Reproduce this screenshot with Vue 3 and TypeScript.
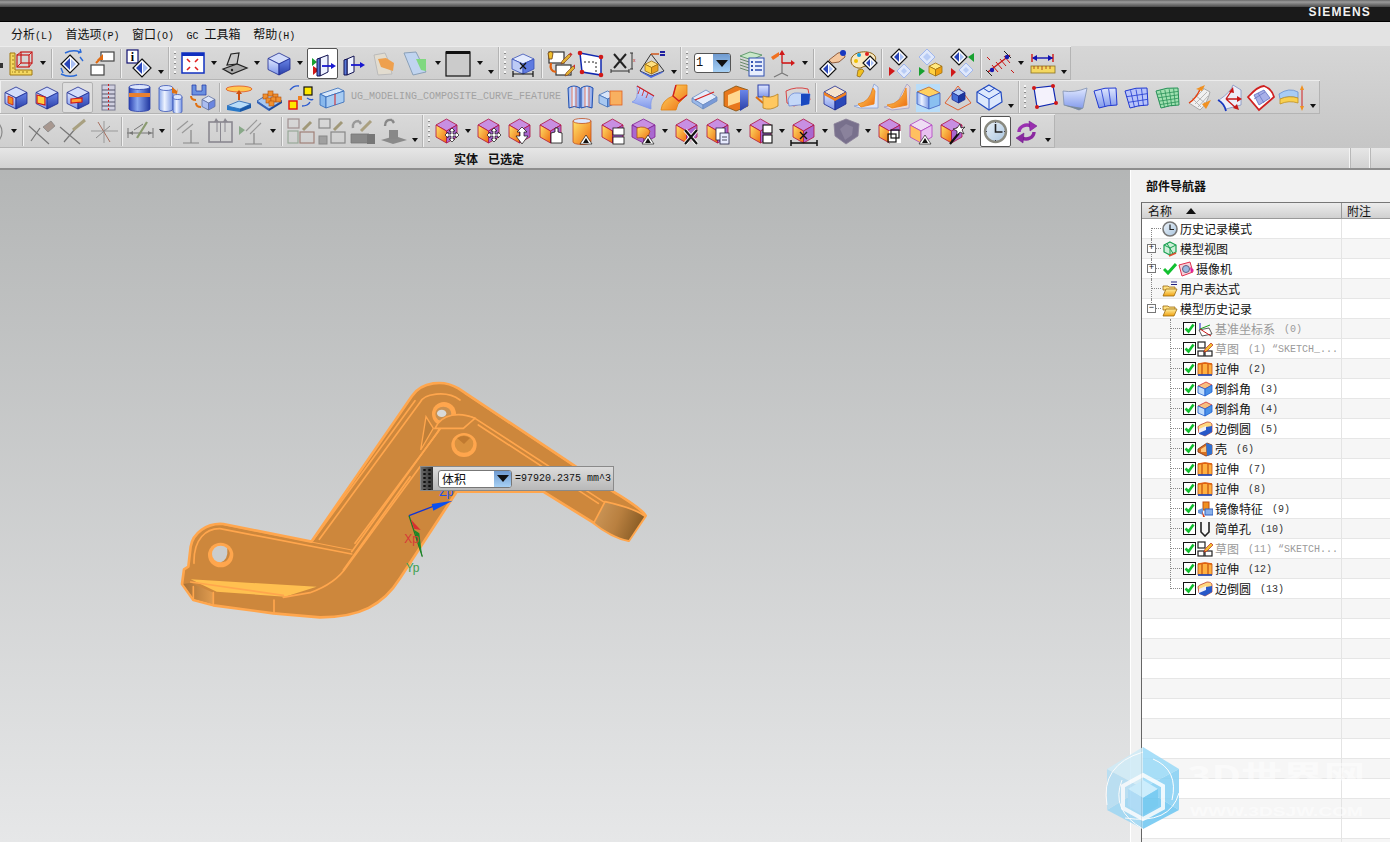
<script setup lang="ts">
// --- svg helpers, every toolbar icon is 31x31
const poly = (p: string, f: string, s = 'none', w = 0.8) =>
  `<polygon points="${p}" fill="${f}" stroke="${s}" stroke-width="${w}"/>`
const line = (d: string, s = '#222', w = 1, extra = '') =>
  `<path d="${d}" fill="none" stroke="${s}" stroke-width="${w}" ${extra}/>`
const fillp = (d: string, f: string, s = 'none', w = 0.8) =>
  `<path d="${d}" fill="${f}" stroke="${s}" stroke-width="${w}"/>`
const rect = (x: number, y: number, w: number, h: number, f: string, s = 'none', sw = 1) =>
  `<rect x="${x}" y="${y}" width="${w}" height="${h}" fill="${f}" stroke="${s}" stroke-width="${sw}"/>`
const cube = (x: number, y: number, w: number, h: number, t: string, l: string, r: string, s = '#1c2a90') => {
  const m = x + w / 2, a = y + h * 0.25, b = y + h * 0.5, c = y + h * 0.75, d = y + h
  return poly(`${m},${y} ${x + w},${a} ${m},${b} ${x},${a}`, t, s) +
    poly(`${x},${a} ${m},${b} ${m},${d} ${x},${c}`, l, s) +
    poly(`${x + w},${a} ${m},${b} ${m},${d} ${x + w},${c}`, r, s)
}
const blueCube = cube(5, 5, 22, 22, '#d3ddfa', 'url(#gBlue)', 'url(#gDeep)')
const lightCube = cube(5, 6, 22, 20, '#e4ebfd', '#bccbf6', '#5f7be0', '#3850b8')
const fc = cube(5, 3, 21, 24, '#c88fe2', 'url(#gOr)', '#a968d0', '#b01040')
const cyl = (x: number, y: number, w: number, h: number, f = 'url(#gCyl)', s = '#3a55b8') =>
  fillp(`M${x} ${y + 2}v${h}a${w / 2} 2.5 0 0 0 ${w} 0v-${h}z`, f, s) +
  `<ellipse cx="${x + w / 2}" cy="${y + 2}" rx="${w / 2}" ry="2.5" fill="#dde6fc" stroke="${s}" stroke-width=".8"/>`
const diamond = (x: number, y: number, r = 8, c = '#2a46b8') =>
  poly(`${x},${y - r} ${x + r},${y} ${x},${y + r} ${x - r},${y}`, '#fff', '#111', 1.2) +
  fillp(`M${x} ${y - r + 3}v${2 * r - 6}l-${r - 3} -${r - 3}z`, c) +
  fillp(`M${x + 1} ${y - r + 4}v${2 * r - 8}l${r - 4} -${r - 4}z`, '#a9c0f4')
const paleDiamond = (x: number, y: number, r = 8) =>
  poly(`${x},${y - r} ${x + r},${y} ${x},${y + r} ${x - r},${y}`, '#dfe8fb', '#9fb6ee', 1) +
  poly(`${x},${y - r + 4} ${x + r - 4},${y} ${x},${y + r - 4} ${x - r + 4},${y}`, '#b8ccf6')
const move = fillp('M21 12l3 3h-2v3h3v-2l3 3-3 3v-2h-3v3h2l-3 3-3-3h2v-3h-3v2l-3-3 3-3v2h3v-3h-2z', '#fff', '#111', 0.7)
const warn = fillp('M20 19l6 9h-12z', '#fff', '#000', 0.6) + fillp('M20 22l3 5h-6z', '#111')
const pencil = (x: number, y: number, c = '#e0b030') =>
  fillp(`M${x} ${y}l7-7 2 2-7 7-3 1z`, c, '#7a3010', 0.6) + fillp(`M${x + 7} ${y - 7}l1.5-1.5 2 2-1.5 1.5z`, '#d03030')
const surf = (cols: number, rows: number, c: string, f: string) => {
  let s = fillp('M4 9q11-4 22-3l1 17q-9 0-18 3z', f, c, 1)
  for (let i = 1; i < cols; i++) { const k = i / cols; s += line(`M${4 + 22 * k} ${9 - 3 * k}l${5 - 4 * k} 17`, c, 0.8) }
  for (let i = 1; i < rows; i++) { const k = i / rows; s += line(`M${4 + 5 * k} ${9 + 17 * k}l${22 - 4 * k} -3`, c, 0.8) }
  return s
}

const icons: Record<string, string> = {
  partial: rect(25, 15, 3, 5, '#333'),
  lcube: fillp('M4 5h5v17h17v5h-22z', '#f4d860', '#a07810', 1) + line('M6 24h1M9 25v-2M13 25v-2M17 25v-2M21 25v-2M6 20h2M6 16h2M6 12h2M6 8h2', '#8a6a10', .8) +
    rect(11, 7, 12, 12, 'none', '#c81818', 1.2) + rect(15, 4, 11, 11, 'none', '#c81818', 1.2) + line('M11 7l4-3M23 7l3-3M23 19l3-4M11 19l4-4', '#c81818', 1),
  dsync: diamond(14, 16, 9) + line('M9 5Q17 1 24 4M22 5l3-1-1-3M24 9l3 4M5 20l2 5M5 26Q13 30 21 27', '#2a6ad8', 1.4),
  boxes: rect(14, 4, 13, 9, '#fff', '#444', 1.2) + rect(4, 17, 13, 10, '#fff', '#444', 1.2) + line('M9 15l6-6', '#e06a10', 2.2) + fillp('M16 6v6h-6z', '#e06a10'),
  info: rect(3, 2, 11, 13, '#fff', '#101070', 1.2) + `<text x="8.5" y="13" text-anchor="middle" font-size="12" font-weight="700" font-family="Liberation Serif" fill="#000">i</text>` + diamond(18, 20, 9),
  fit: rect(5, 5, 22, 20, '#fff', '#1030c0', 1.5) + rect(5, 5, 22, 3, '#1030c0') + line('M10 11l3 3M21 11l-3 3M10 22l3-3M21 22l-3-3', '#e02020', 1.6),
  laptop: fillp('M7 17l4-11 8-1-2 11z', '#c8c8c8', '#222', 1.2) + fillp('M3 21l14-5 10 4-15 6z', '#aaa', '#222', 1.2) + `<circle cx="12" cy="22" r="1.2" fill="#222"/>`,
  bluecube: blueCube,
  section: poly('5,10 10,14 5,18', '#18a030') + poly('6,18 12,22 6,27', '#d01818') + poly('13,10 21,7 21,24 13,28', '#eef2ff', '#101050', 1) + poly('10,11 13,10 13,28 10,28', '#5878d8', '#101050', 1) + line('M15 18h9', '#1818d0', 1.8) + poly('29,18 24,15 24,21', '#1818d0'),
  section2: poly('8,11 15,8 15,24 8,27', '#eef2ff', '#101050', 1) + poly('5,12 8,11 8,27 5,27', '#5878d8', '#101050', 1) + line('M12 17h9', '#1818d0', 1.8) + poly('26,17 21,14 21,20', '#1818d0'),
  sheet: poly('4,7 15,5 19,14 22,26 8,27', '#e2dccf', '#bbb', 1) + poly('8,11 16,10 24,15 23,23 11,19', '#eea04e'),
  greensheet: poly('3,5 15,4 25,24 12,27', '#c0d4f0', '#8aa0b8', 1) + poly('15,11 25,11 25,23 20,22', '#80d880'),
  box: rect(2, 4, 24, 24, '#cbcbcb', '#111', 1.2) + rect(2, 3, 24, 3, '#111'),
  cubedim: lightCube + line('M6 26h20M6 23v6M26 23v6', '#111', 1.2) + line('M13 15l6 6M19 15l-6 6', '#111', 1.3),
  sketchedit: rect(5, 4, 15, 11, '#fff', '#333', 1.2) + rect(12, 17, 15, 10, '#fff', '#333', 1.2) + line('M7 15q-2 8 5 9', '#e06010', 2.2) + fillp('M4 5q3-3 5 0l-1 6h-3z', '#f0c030', '#704010', .8) + pencil(18, 13) + pencil(22, 25),
  quad: poly('5,5 26,9 26,27 7,24', '#fff', '#1028b0', 1.5) + line('M9 14h12M21 14v10', '#222', 1, 'stroke-dasharray="2 2"') +
    `<circle cx="5" cy="5" r="2.3" fill="#d01818"/><circle cx="26" cy="9" r="2.3" fill="#d01818"/><circle cx="26" cy="27" r="2.3" fill="#d01818"/><circle cx="7" cy="24" r="2.3" fill="#d01818"/>`,
  xdim: line('M8 6l12 14M20 6l-12 14', '#222', 2) + line('M5 23h18M5 21v4M23 21v4M24 5h3M26 5v16M24 21h3', '#333', 1) + `<text x="27" y="14" font-size="5" fill="#c02020" font-family="Liberation Sans">x</text>`,
  pyramid: poly('14,6 3,23 14,28 27,23', 'none', '#333', 1) + cube(8, 13, 13, 13, '#ffe080', '#ffd040', '#e8a020', '#a07010') + poly('3,23 14,28 27,23 25,25 14,30 5,25', '#4868e0') + line('M14 6h8', '#d05010', 1.4) + rect(23, 3, 5, 2, '#2020a0') + rect(23, 6, 5, 2, '#2020a0'),
  layers: poly('3,8 13,4 25,7 15,12', '#c8e8c8', '#4a8a5a') + line('M3 11l12 4M3 14l12 4M3 17l12 4M3 20l12 4', '#6a8a6a', 1) + rect(12, 10, 15, 18, '#e8eefc', '#3050b0', 1) + line('M18 14h7M18 18h7M18 22h7', '#3050b0', 1.4) + rect(14, 13, 2, 2, '#3050b0') + rect(14, 17, 2, 2, '#3050b0') + rect(14, 21, 2, 2, '#3050b0'),
  axes: line('M14 15v10M14 25l-8 4M14 25l6 3', '#777', 1.2) + line('M14 15h11', '#d01818', 1.6) + line('M14 4v11', '#d01818', 1.4) + poly('27,15 23,12 23,18', '#d01818') + poly('14,2 11,7 17,7', '#d01818') + poly('3,9 11,4 11,8 5,12', '#f07020'),
  hand: diamond(11, 21, 8) + fillp('M12 12l9-7 6-1 1 5-6 5-7 1z', '#f4c8a0', '#7a4020', .8) + `<circle cx="26" cy="5" r="3" fill="#1838c0"/>`,
  palette: fillp('M3 12C4 3 22 1 27 8c3 5-4 10-9 10-3 0-5 3-8 2C6 19 3 17 3 12z', '#f8e8c0', '#8a6010', 1) + `<circle cx="11" cy="7" r="2" fill="#18a0e0"/><circle cx="19" cy="6" r="2" fill="#e02020"/><circle cx="8" cy="13" r="2" fill="#f0c000"/>` + diamond(22, 15, 7) + fillp('M10 22l4-1 2 2-4 6-3-1z', '#f0c020', '#8a6010', .7),
  dia1: diamond(14, 9, 8) + poly('4,19 10,23 4,28', '#d01818') + paleDiamond(19, 23, 7),
  dia2: paleDiamond(11, 9, 8) + cube(13, 15, 13, 13, '#ffe880', '#ffd040', '#f0a010', '#a07010') + poly('3,19 9,23 3,28', '#18a030'),
  dia3: diamond(12, 9, 8) + poly('27,5 21,9 27,14', '#18a030') + poly('4,20 9,24 4,29', '#d01818') + paleDiamond(19, 22, 7),
  hatch: line('M4 24L26 7', '#c81818', 1.4) + line('M8 17l6 7M12 14l6 7M16 11l6 7M20 8l6 7M6 12L3 9M27 22l3 3', '#c81818', 1) + line('M2 22l6 6M20 3l7 7', '#222', 1) + `<circle cx="8" cy="22" r="2.2" fill="#1818b0"/><circle cx="23" cy="9" r="2.2" fill="#1818b0"/>`,
  ruler: line('M6 10h20', '#1010b0', 1.4) + line('M5 6v8M26 6v8', '#d01818', 1.4) + poly('5,10 10,7 10,13', '#1010b0') + poly('26,10 21,7 21,13', '#1010b0') + rect(4, 18, 24, 7, '#f4d860', '#8a7020', .8) + line('M7 18v3M11 18v3M15 18v4M19 18v3M23 18v3', '#a03010', .8),

  c1: blueCube + poly('8,14 13,16 13,23 8,21', '#f09020', '#c81818'),
  c2: blueCube + poly('6,13 14,15 14,23 6,21', '#ffd040', '#d01818', 1.2),
  c3: blueCube + poly('9,17 20,16 20,20 9,21', '#ffa030', '#d01818', 1.2),
  spring: rect(9, 3, 13, 25, '#d0d0e0', '#7a7a90', 1) + line('M9 8h13M9 12h13M9 16h13M9 20h13M9 24h13', '#55556a', 1) + line('M15.5 2v27', '#d02020', 1, 'stroke-dasharray="2 2"'),
  stack: cyl(5, 3, 21, 22, 'url(#gDeepCyl)', '#2a3fa8') + rect(5, 11, 21, 4, '#e88030'),
  cyls: cyl(4, 4, 14, 21) + cyl(18, 13, 9, 14) + fillp('M17 5l5 4 1-3-1 6-5-1z', '#e07010'),
  combo: fillp('M6 3h4v6h6V3h4v10H6z', '#6a90e0', '#2a3fa8') + line('M10 21q0 4 5 4', '#e07010', 2) + cube(16, 14, 13, 14, '#dde6fa', '#aabdf0', '#6a86e0', '#6070a0') + line('M5 14q0 4 5 4', '#e07010', 2),
  boss: `<ellipse cx="16" cy="7" rx="13" ry="3" fill="#ffc850" stroke="#e05020" stroke-width=".8"/>` + line('M16 10v8', '#d05010', 2) + poly('16,8 13,12 19,12', '#d05010') + poly('4,24 16,19 28,22 17,27', '#b8dcf8', '#2060b0') + poly('4,24 17,27 17,30 4,28', '#2878c8') + poly('17,27 28,22 28,26 17,30', '#1858a8'),
  pegs: poly('3,19 16,11 28,19 15,27', '#a8c8f0', '#2050a8') + poly('3,19 15,27 15,29 3,21', '#3060b8') + poly('15,27 28,19 28,21 15,29', '#1848a0') + [[10, 15], [15, 12], [20, 15], [13, 19], [18, 18], [23, 18], [16, 22]].map(([x, y]) => rect(x - 1, y - 3, 5, 5, '#f09030', '#b05010', .6)).join(''),
  pts2: rect(19, 5, 8, 8, '#ffe800', '#111', 1.2) + rect(4, 19, 8, 8, '#ffe800', '#e01010', 1.4) + line('M5 8q4-5 9-4M22 16q5 3 6 1M17 24q6 0 8-4', '#2858d0', 1.4) + rect(13, 14, 4, 4, '#f08020'),
  block: poly('4,12 22,6 28,9 10,15', '#d8e8fa', '#3068b8') + poly('4,12 10,15 10,26 4,23', '#88b8ec', '#3068b8') + poly('10,15 28,9 28,20 10,26', '#a8ccf2', '#3068b8') + line('M19 12v11', '#d82020', 1),
  book: fillp('M3 6q6-4 12 0v20q-6-3-11 0z', 'url(#gCyl)', '#2050b0', 1) + fillp('M16 6q6-4 12 0l-1 20q-5-3-11 0z', 'url(#gCyl)', '#2050b0', 1) + line('M7 5v20M11 5v20M20 5v20M24 5v20', '#d04020', .7),
  boxor: cube(3, 9, 17, 16, '#d8e6fa', '#a8c8f0', '#6898e0', '#4070b8') + rect(14, 9, 12, 14, '#f8b060', '#e06020', .8),
  sweep: fillp('M5 20Q12 18 10 4l17 10q-4 3-3 13z', 'url(#gBlue)', '#7f97ea') + line('M10 4l17 10', '#d02020', 1.2) + line('M13 6l-2 6M17 8l-2 6M21 11l-2 5', '#d02020', .8),
  swept: fillp('M3 28q1-10 12-14l3-11h11v10l-9 9-2 6z', 'url(#gOr)', '#e08010') + line('M18 3l-3 11 6 5 8-6', '#d02020', 1.4),
  plate: poly('3,16 17,8 28,15 14,23', '#e4ecfb', '#6a8ac0') + poly('3,16 14,23 14,27 3,20', '#9ab8e8', '#6a8ac0') + poly('14,23 28,15 28,19 14,27', '#7a9ad8', '#6a8ac0') + line('M6 18l19-8', '#d82020', 1.2),
  frame: poly('4,10 16,4 28,8 28,24 16,29 4,24', '#e8781c', '#805010') + poly('8,13 20,8 20,20 8,24', '#ffd890') + poly('20,8 28,8 28,24 20,29', 'url(#gDeep)'),
  mirror2: rect(7, 3, 11, 12, 'url(#gBlue)', '#2a3fa8') + line('M5 15l7 6', '#e07010', 2) + fillp('M12 14q7 3 15-2v12q-8 5-15 2z', '#ffc860', '#b88020'),
  dashbox: fillp('M4 9q10-5 22-2l2 11-16 6-7-3z', 'none', '#d82020', .8) + fillp('M6 18q2-8 10-7l12 1-1 10-20 2z', '#c4d8f8', '#6a8ad8') + poly('19,12 28,12 27,22 19,24', '#1848c0'),
  band: cube(5, 4, 22, 24, '#f4e4d0', 'url(#gBlue)', '#2a48b8') + poly('5,10 16,16 27,10 27,13 16,19 5,13', '#f08020'),
  corner1: fillp('M4 24q13-1 17-13l3-9 4 3v21H10z', '#dde6fa', '#8aa0d0') + fillp('M8 22q12-2 15-16l2 3-1 13-13 3z', 'url(#gOr)', '#f08010'),
  corner2: fillp('M3 25q14-1 18-14l5-9 3 3-1 21-17 2z', '#e8d8d8', '#a0a0c8') + fillp('M6 23q14-1 19-17l1 17-15 3z', 'url(#gOr)', '#f08010'),
  topband: rect(4, 2, 24, 28, '#b8dcf8') + poly('5,10 17,5 28,11 17,15', '#ffd060', '#c06020') + poly('5,10 17,15 17,27 5,22', 'url(#gCyl)', '#4060c0') + poly('17,15 28,11 28,23 17,27', '#8ac0f0', '#4060c0'),
  pyr2: poly('15,4 2,21 15,28 28,21', 'none', '#e06030', 1) + cube(9, 7, 13, 14, '#b8d0f8', '#4870d8', '#1a38a0'),
  wire: poly('15,3 27,10 28,20 15,28 3,20 3,10', '#dce8fc', '#2048c0', 1.2) + line('M3 10l12 7 12-7M15 17v11M9 6l6 4 6-4', '#2048c0', 1),
  s1: poly('6,6 25,4 28,21 9,25', '#f4f2fc', '#1028b0', 1.2) + `<circle cx="6" cy="6" r="2" fill="#d01818"/><circle cx="25" cy="4" r="2" fill="#d01818"/><circle cx="28" cy="21" r="2" fill="#d01818"/><circle cx="9" cy="25" r="2" fill="#d01818"/>`,
  s2: fillp('M4 9q11 2 24-3l-4 20-4 2q-8-4-15-5z', 'url(#gBlue)', '#8090b0') + fillp('M4 23l16 5 4-2z', '#7a8a9a'),
  s3: surf(3, 1, '#2038d0', 'url(#gBlue)'),
  s4: surf(4, 3, '#2038d0', '#b8c4fa'),
  s5: surf(5, 5, '#289058', '#a0e0b0'),
  s6: fillp('M6 21Q14 16 18 5l9 5q-3 12-10 18z', '#f0f0f0', '#999') + line('M9 19l12-12M12 22l12-12M15 25l10-11M12 13l10 8M9 16l9 9', '#aaa', .8) + line('M6 21q8-5 12-16', '#e84010', 1.4) + poly('13,7 22,3 19,9', '#f09020') + poly('19,22 28,18 23,27', '#f09020'),
  s7: fillp('M5 18Q17 10 19 3l8 5v15q-8 2-15 4z', '#eceef8', '#8090c0') + line('M4 18q6 3 8 11', '#1838c0', 1.8) + line('M12 17l6-9M12 17l13 0M12 17l10 9', '#c81818', 1.3) + poly('19,5 15,10 20,11', '#c81818') + poly('28,17 23,14 23,20', '#c81818') + poly('25,28 19,26 23,22', '#c81818'),
  s8: fillp('M3 15Q13 4 19 4q8 3 10 11l-15 13z', '#fff', '#d02020', 1.8) + fillp('M9 13l10-5 6 8-11 7z', '#a8b0e8', '#6070c0') + line('M13 11l6 10M9 17l11-7', '#6070c0', .7),
  s9: fillp('M3 12q10-7 19-2v6q-9-3-18 1z', '#a8ccf4', '#6890d0') + fillp('M4 17q9-4 18-1v5q-9-3-18 1z', '#f8d050', '#c09020') + line('M26 7v18', '#d02020', 1) + poly('26,3 24,8 28,8', '#f09020') + poly('26,29 24,24 28,24', '#f09020'),

  circle: `<circle cx="17" cy="16" r="13" fill="none" stroke="#888" stroke-width="1.2"/>`,
  g1: line('M3 10l20 18M5 25l9-13', '#777', 1.2) + poly('17,11 25,5 29,10 22,16', '#a89890', '#888'),
  g2: line('M3 11l20 17M7 26l11-13', '#777', 1.2) + line('M16 14l12-10', '#a8a080', 3),
  g3: line('M3 15h27M16 5v22', '#999', 1) + line('M10 6l12 20', '#a87060', 1) + line('M8 22l14-12', '#8a8a8a', 1),
  g4: line('M2 17h26M3 12v10M28 12v10', '#777', 1) + poly('4,17 8,15 8,19', '#777') + poly('27,17 23,15 23,19', '#777') + line('M12 22L22 6', '#8a9a70', 2.2) + line('M9 14l9-6', '#777', 1),
  g5: line('M3 14l11-9M8 17l11-9', '#999', 1.2) + line('M17 14v13M9 27h16', '#888', 1.2),
  g6: rect(4, 6, 23, 20, 'none', '#8a8890', 1.6) + line('M12 6v10M20 6v10M15.5 6v20', '#8a8890', 1) + poly('11,2 14,6 9,6', '#8a8890') + poly('20,2 23,6 18,6', '#8a8890'),
  g7: poly('3,10 9,14 3,19', '#88a888') + line('M10 15l11-11M14 18l11-11', '#999', 1.2) + line('M18 17v11M9 28h17', '#888', 1.2),
  g8: rect(3, 3, 11, 9, 'none', '#a09090', 1.2) + rect(3, 15, 10, 12, 'none', '#98a898', 1.2) + rect(15, 16, 14, 11, 'none', '#a08078', 1.2) + line('M18 14l8-8', '#a09878', 3),
  g9: rect(3, 3, 11, 9, 'none', '#888', 1.2) + rect(15, 16, 14, 11, 'none', '#888', 1.2) + rect(3, 20, 8, 8, '#a0a0a0', '#888') + line('M18 14l8-8', '#a09878', 3),
  g10: fillp('M4 18h18v9H4z', '#888', '#777') + line('M6 12q-1-7 6-7M12 5l2 3', '#999', 2.4) + line('M14 15L24 5', '#aaa080', 3) + rect(20, 18, 8, 10, '#777'),
  g11: fillp('M3 24l14-4 12 4-14 4z', '#8a8a8a') + rect(11, 14, 9, 9, '#888') + line('M7 10q0-7 7-6M14 4l2 3', '#888', 2.4),

  fmove: fc + move,
  fup: fc + fillp('M18 11l5 5h-3v4h4l-6 8-6-8h4v-4h-3z', '#fff', '#111', .7),
  fhand: fc + fillp('M16 17l4-1v-4h3v4l4 1v10h-11z', '#fff', '#111', .8),
  fcyl: cyl(7, 3, 18, 21, 'url(#gOr)', '#c05020') + warn,
  fswap: fc + rect(16, 12, 11, 7, '#fff', '#111', .8) + rect(16, 21, 11, 7, '#fff', '#111', .8),
  fcurve: cube(4, 3, 23, 24, '#c88fe2', '#a968d0', '#a968d0', '#802090') + fillp('M9 12q8-3 13 3l-3 9q-5-4-10-2z', 'url(#gOr)', '#b05010') + warn,
  fx: fc + line('M14 14l12 14M26 14L14 28', '#fff', 4) + line('M14 14l12 14M26 14L14 28', '#111', 2.2),
  fdoc: fc + rect(14, 12, 9, 12, '#fff', '#224', .8) + rect(18, 17, 9, 11, '#e8ecff', '#224', .8) + line('M20 21h5M20 24h5', '#223', .8),
  fsplit: fc + rect(18, 9, 9, 8, '#fff', '#111', 1.1) + rect(18, 19, 9, 8, '#fff', '#111', 1.1),
  fdim: fc + line('M3 27h26M3 24v6M29 24v6', '#111', 1.5) + line('M12 16l7 7M19 16l-7 7', '#111', 1.4),
  hexgrey: poly('15,3 28,8 27,20 15,28 4,20 3,8', '#78708c', '#8a8098') + poly('9,13 15,8 22,11 21,19 14,24', '#8a829c'),
  fcrop: fc + rect(15, 15, 12, 12, '#fff') + rect(17, 14, 8, 8, 'none', '#111', 1.2) + rect(14, 18, 8, 8, 'none', '#111', 1.2),
  fbox2: cube(5, 3, 22, 24, '#eedcf4', '#ffc060', '#e8c0f0', '#b040c0') + warn,
  fwand: fc + line('M14 28l9-11', '#111', 2.2) + fillp('M24 8l1 4 4-1-3 3 2 4-4-2-3 3v-4l-4-2 4-1z', '#fff', '#111', .7),
  clock: `<circle cx="15.500" cy="15.500" r="10.500" fill="url(#gClock)" stroke="#8a8a80" stroke-width="2.400"/>` + line('M15.500 8v8h7', '#222', 1.6) + line('M15.500 6v1M15.500 24v1M6 15.500h1M24 15.500h1', '#445', 1),
  rotate: line('M8 16A8 7 0 0 1 20 10', '#9a30b0', 3.4) + poly('18,5 26,10 19,15', '#9a30b0', '#6a1888', .5) + line('M23 16A8 7 0 0 1 11 22', '#8a28a0', 3.4) + poly('13,17 5,22 12,27', '#8a28a0', '#6a1888', .5),
}

// toolbar rows: 'v' arrow, 'w' low arrow, '|' separator, ':' grip, '*x' boxed, '#x' pressed, numbers are spacers
type Cell = string | number
const rows: { lead: number; panels: Cell[][] }[] = [
  {
    lead: -25,
    panels: [
      ['partial', 'lcube', 'v', '|', 1, 'dsync', 'boxes', '|', 'info', 'w', 2],
      [':', 'fit', 'v', 'laptop', 'v', 'bluecube', 'v', 1, '*section', 1, 'section2', 'sheet', 'greensheet', 'v', 'box', -1, 'v', -1, 'w', 2],
      [':', 'cubedim', 1, '|', -1, 'sketchedit', 'quad', 'xdim', 'pyramid', 'w', 1],
      [':', 5, 'COMBO', 6, 'layers', 'axes', 'v', '|', 'hand', 'palette', '|', 'dia1', 'dia2', 'dia3', '|', 'hatch', 'v', 'ruler', 'w', 1],
    ],
  },
  {
    lead: 0,
    panels: [
      ['c1', 'c2', '#c3', 'spring', 'stack', 'cyls', 'combo', '|', 'boss', 'pegs', 'pts2', 'block', 'LABEL', 'book', 'boxor', 'sweep', 'swept', 'plate', 'frame', 'mirror2', 'dashbox', '|', 'band', 'corner1', 'corner2', 'topband', 'pyr2', 'wire', 'w', 2],
      [':', 1, 's1', 's2', 's3', 's4', 's5', 's6', 's7', 's8', 's9', 'w', 1],
    ],
  },
  {
    lead: -28,
    panels: [
      ['circle', 5, 'v', '|', 'g1', 'g2', 'g3', '|', 'g4', 'v', '|', 'g5', 'g6', 'g7', 'v', '|', 'g8', 'g9', 'g10', 'g11', 'w', 2],
      [':', 'fmove', 'v', -1, 'fmove', 'fup', 'fhand', 'fcyl', 'fswap', 'fcurve', 'v', 'fx', 'fdoc', 'v', 'fsplit', 'v', 'fdim', 'v', 'hexgrey', 'v', 'fcrop', 'fbox2', 'fwand', 'v', 1, '*clock', 'rotate', 'w', 1],
    ],
  },
]
const isNum = (c: Cell) => typeof c === 'number'
const iconOf = (c: Cell) => icons[String(c).replace(/^[*#]/, '')] ?? ''
const boxClass = (c: Cell) => (String(c)[0] === '*' ? 'boxed' : String(c)[0] === '#' ? 'pressed' : '')

const menus = [
  { pre: '', name: '分析', key: '(L)' },
  { pre: '', name: '首选项', key: '(P)' },
  { pre: '', name: '窗口', key: '(O)' },
  { pre: 'GC ', name: '工具箱', key: '' },
  { pre: '', name: '帮助', key: '(H)' },
]

// --- part navigator, icons are 16x16
const treeIcons: Record<string, string> = {
  clock: `<circle cx="8" cy="8" r="7" fill="url(#gClock)" stroke="#777" stroke-width="1.6"/>` + line('M8 3.5V8.500h4', '#222', 1.2),
  view: poly('8,1 14,4 14,11 8,14 2,11 2,4', '#cdeed8', '#18a050', 1.2) + line('M2 4l6 3 6-3M8 7v7M5 2.500l6 10', '#18a050', 1) + line('M7 15l7-3', '#e05030', 1.6),
  camera: poly('1,4 12,1 15,11 4,15', '#f8d0d8', '#e03050', 1) + `<circle cx="8" cy="8" r="3.500" fill="#9ab8e0" stroke="#606080"/>` + poly('12,6 16,9 13,12', '#e020a0'),
  folder: fillp('M1 5h5l1 1h6v3H1z', '#ffe080', '#9a6a10') + fillp('M1 15l3-7h11l-3 7z', 'url(#gGold)', '#9a6a10'),
  exprfolder: fillp('M1 5h5l1 1h6v3H1z', '#ffe080', '#9a6a10') + fillp('M1 15l3-7h11l-3 7z', 'url(#gGold)', '#9a6a10') + line('M9 1h6M9 3.500h6', '#202080', 1.2),
  datum: line('M3 2v7', '#1818c0', 1) + poly('2,9 12,7 15,13 5,15', '#fff', '#333', .8) + line('M3 8l10-4', '#18a018', 1) + line('M3 8l11 7', '#c81818', 1),
  sketch: rect(1, 1, 7, 6, '#fff', '#222', 1.2) + rect(1, 10, 6, 5, '#fff', '#222', 1.2) + rect(8, 10, 7, 5, '#fff', '#222', 1.2) + fillp('M8 8l6-6 2 2-6 6-3 1z', '#f0c030', '#c02020', .7),
  extrude: fillp('M1 3l7-1 7 1v11H1z', '#ffb040', '#c05010') + line('M5 3v11M11 3v11', '#c05010', 1.2) + line('M1 14h14', '#1848c0', 1.6) + line('M1 3l7-1 7 1', '#e06010', 1.4),
  chamfer: poly('1,5 9,1 15,4 8,8', '#f8c080', '#d03030') + poly('1,5 8,8 8,15 1,12', '#c0dcfa', '#2060d0') + poly('8,8 15,4 15,11 8,15', '#4890e8', '#2060d0'),
  blend: fillp('M1 6q0-1 2-2l7-3q5 0 5 3v7l-7 4-6-3z', '#ffd880', '#c04030') + poly('2,9 9,6 15,5 15,11 8,15 2,13', '#2858c8') + poly('2,8 9,5 9,9 2,12', '#f0f0f8'),
  shell: poly('1,8 10,2 15,4 15,13 9,15 1,11', '#d87020', '#803010') + poly('4,8 9,5 9,11 4,11', '#ffc880') + poly('9,2 15,4 15,13 10,15', '#3070d0'),
  mirror: rect(6, 1, 6, 8, '#f09020', '#c05010') + poly('1,9 6,7 6,14 1,12', '#6898e0') + rect(8, 8, 8, 6, '#8ab0ea', '#3060c0') + poly('5,10 8,16 6,16', '#e04010'),
  hole: line('M4 1v10l4 4 4-4V1', '#222', 1.6),
}
interface TreeRow { top?: boolean; toggle?: string; mark?: boolean; icon?: string; label?: string; note?: string; dim?: boolean; last?: boolean; first?: boolean }
const feat = (icon: string, label: string, note: string, dim = false): TreeRow => ({ icon, label, note, dim })
const treeRows: TreeRow[] = [
  { top: true, icon: 'clock', label: '历史记录模式', first: true },
  { top: true, toggle: '+', icon: 'view', label: '模型视图' },
  { top: true, toggle: '+', mark: true, icon: 'camera', label: '摄像机' },
  { top: true, icon: 'exprfolder', label: '用户表达式' },
  { top: true, toggle: '-', icon: 'folder', label: '模型历史记录', last: true },
  feat('datum', '基准坐标系', '(0)', true),
  feat('sketch', '草图', '(1) “SKETCH_...', true),
  feat('extrude', '拉伸', '(2)'),
  feat('chamfer', '倒斜角', '(3)'),
  feat('chamfer', '倒斜角', '(4)'),
  feat('blend', '边倒圆', '(5)'),
  feat('shell', '壳', '(6)'),
  feat('extrude', '拉伸', '(7)'),
  feat('extrude', '拉伸', '(8)'),
  feat('mirror', '镜像特征', '(9)'),
  feat('hole', '简单孔', '(10)'),
  feat('sketch', '草图', '(11) “SKETCH...', true),
  feat('extrude', '拉伸', '(12)'),
  { ...feat('blend', '边倒圆', '(13)'), last: true },
  ...Array.from({ length: 13 }, () => ({})),
]
</script>

<template>
  <div class="app">
    <svg class="defs" width="0" height="0">
      <defs>
        <linearGradient id="gBlue" x1="0" y1="0" x2="0" y2="1"><stop offset="0" stop-color="#dfe7ff" /><stop offset="1" stop-color="#7f97ea" /></linearGradient>
        <linearGradient id="gDeep" x1="0" y1="0" x2="0" y2="1"><stop offset="0" stop-color="#6a86e8" /><stop offset="1" stop-color="#2a3fa8" /></linearGradient>
        <linearGradient id="gOr" x1="0" y1="0" x2="1" y2="1"><stop offset="0" stop-color="#ffe46a" /><stop offset="1" stop-color="#ee6a10" /></linearGradient>
        <linearGradient id="gCyl" x1="0" y1="0" x2="1" y2="0"><stop offset="0" stop-color="#8aa8ea" /><stop offset=".4" stop-color="#eef3ff" /><stop offset="1" stop-color="#7a98e4" /></linearGradient>
        <linearGradient id="gDeepCyl" x1="0" y1="0" x2="1" y2="0"><stop offset="0" stop-color="#2a3fb0" /><stop offset=".4" stop-color="#8aa8f0" /><stop offset="1" stop-color="#2238a0" /></linearGradient>
        <linearGradient id="gGold" x1="0" y1="0" x2="0" y2="1"><stop offset="0" stop-color="#fff0a0" /><stop offset="1" stop-color="#f0a010" /></linearGradient>
        <linearGradient id="gClock" x1="0" y1="0" x2="1" y2="1"><stop offset="0" stop-color="#eef4fa" /><stop offset="1" stop-color="#a8c4de" /></linearGradient>
        <linearGradient id="gEnd" x1="0" y1="0" x2="1" y2="0.3"><stop offset="0" stop-color="#cf9a5c" /><stop offset=".55" stop-color="#b98040" /><stop offset="1" stop-color="#8c5e26" /></linearGradient>
        <linearGradient id="gWall" x1="0" y1="0" x2="1" y2="0"><stop offset="0" stop-color="#a87034" /><stop offset="1" stop-color="#e09c50" /></linearGradient>
      </defs>
    </svg>

    <header class="titlebar"><span class="brand">SIEMENS</span></header>

    <nav class="menubar">
      <span v-for="m in menus" :key="m.name" class="menu"><span v-if="m.pre" class="key">{{ m.pre }}</span>{{ m.name }}<span v-if="m.key" class="key">{{ m.key }}</span></span>
    </nav>

    <div class="tools">
      <div v-for="(row, r) in rows" :key="r" class="tool-row">
        <div class="lead" :style="{ marginLeft: row.lead + 'px' }"></div>
        <div v-for="(panel, p) in row.panels" :key="p" class="panel">
          <template v-for="(c, i) in panel" :key="i">
            <span v-if="isNum(c)" :style="{ width: Math.max(+c, 0) + 'px', marginLeft: Math.min(+c, 0) + 'px' }"></span>
            <span v-else-if="c === 'v'" class="arrow"></span>
            <span v-else-if="c === 'w'" class="arrow low"></span>
            <span v-else-if="c === '|'" class="sep"></span>
            <span v-else-if="c === ':'" class="grip"></span>
            <span v-else-if="c === 'COMBO'" class="layer-combo"><b>1</b><i></i></span>
            <span v-else-if="c === 'LABEL'" class="tool-label">UG_MODELING_COMPOSITE_CURVE_FEATURE</span>
            <span v-else class="tool" :class="boxClass(c)">
              <svg width="31" height="31" viewBox="0 0 31 31" v-html="iconOf(c)"></svg>
            </span>
          </template>
        </div>
      </div>
    </div>

    <div class="statusbar">
      <span class="status-text">实体<span class="status-second">已选定</span></span>
      <span class="status-cell"></span>
      <span class="status-cell"></span>
    </div>

    <main class="main">
      <section class="viewport">
        <svg class="model" width="490" height="260" viewBox="0 0 1470 780">
          <path d="M36 642L42 598L55 590L62 530C68 490 110 458 160 462L424 515L726 78C755 35 820 28 865 55L1330 365C1380 395 1420 425 1427 437L1376 512C1340 505 1300 482 1270 458L1120 365H860L690 625C640 705 570 742 450 742L310 730L130 706L70 690Z" fill="#cd873c" stroke="#ffa64d" stroke-width="8" stroke-linejoin="round" />
          <path d="M40 642L62 638L130 668V702L72 686Z" fill="url(#gWall)" />
          <path d="M62 628L440 650L345 680L140 665Z" fill="#ffc050" />
          <path d="M1305 395C1350 405 1400 420 1424 438L1376 510C1340 503 1300 480 1274 458Z" fill="url(#gEnd)" />
          <g fill="none" stroke="#ffa64d" stroke-width="5" stroke-linecap="round" stroke-linejoin="round">
            <path d="M428 512L735 92" />
            <path d="M448 508L748 100C760 70 830 60 870 90" />
            <path d="M545 545L800 190C825 140 880 130 915 145L1300 395" />
            <path d="M555 520L810 178" />
            <path d="M925 165L1285 400" />
            <path d="M885 70L1340 372" />
            <path d="M72 580C70 505 110 475 150 476L545 552" />
            <path d="M150 462L545 540" stroke-width="3" />
            <path d="M340 682L420 668C470 650 510 620 530 590L750 290" />
            <path d="M520 600L720 320" />
            <path d="M62 636L340 676" />
            <path d="M130 668V704M312 690V730M70 650V690" />
            <path d="M1272 458L1305 395" />
            <path d="M1305 395C1350 405 1400 420 1424 438" />
            <path d="M1340 372Q1390 395 1420 430" stroke-width="3" />
          </g>
          <path d="M752 240L768 140L790 175Z" fill="#bf7f38" stroke="#ffa64d" stroke-width="4" />
          <ellipse cx="822" cy="132" rx="36" ry="36" fill="#ffa64d" />
          <ellipse cx="820" cy="132" rx="24" ry="22" fill="#c99050" />
          <ellipse cx="815" cy="130" rx="14" ry="11" fill="#d8dada" />
          <path d="M795 175C815 130 870 125 915 145L880 175Z" fill="#cd873c" stroke="#ffa64d" stroke-width="5" />
          <ellipse cx="152" cy="555" rx="38" ry="37" fill="#ffa64d" />
          <ellipse cx="152" cy="552" rx="26" ry="25" fill="#cbcdcd" />
          <path d="M172 535A26 25 0 0 1 152 577Q175 570 172 535Z" fill="#cd873c" />
          <ellipse cx="882" cy="225" rx="38" ry="36" fill="#ffa64d" />
          <ellipse cx="882" cy="222" rx="28" ry="26" fill="#d8913f" />
          <path d="M882 222L862 205Q880 192 900 204Z" fill="#c07a30" />
          <g fill="none" stroke-width="4">
            <path d="M717 437L757 560" stroke="#1d7a24" />
            <path d="M717 437L800 405" stroke="#1034d8" />
          </g>
          <path d="M785 402L848 392L790 422Z" fill="#0a50f0" />
          <path d="M733 480L757 563L748 490Z" fill="#1c8a28" />
          <path d="M722 448L752 480L732 476Z" fill="#d83030" />
          <text x="703" y="520" class="axis" fill="#d83838">Xp</text>
          <text x="707" y="605" class="axis" fill="#3fa050">Yp</text>
          <text x="808" y="378" class="axis" fill="#2050f0">Zp</text>
        </svg>

        <div class="measure">
          <span class="measure-grip"></span>
          <span class="measure-combo"><em>体积</em><i></i></span>
          <span class="measure-value">=97920.2375 mm^3</span>
        </div>
      </section>

      <aside class="navigator">
        <h2 class="nav-title">部件导航器</h2>
        <div class="table">
          <div class="thead">
            <span class="col-name">名称<i class="sort"></i></span>
            <span class="col-note">附注</span>
          </div>
          <div v-for="(t, i) in treeRows" :key="i" class="row" :class="{ alt: i % 2 === 1 }">
            <div class="cell-name" :class="{ top: t.top, feat: t.icon && !t.top }">
              <template v-if="t.icon">
                <span v-if="t.top" class="guide-v top" :class="{ first: t.first, last: t.last }"></span>
                <span v-else class="guide-v sub" :class="{ last: t.last }"></span>
                <span class="guide-h" :class="t.top ? 'top' : 'sub'"></span>
              </template>
              <span v-if="t.toggle" class="toggle">{{ t.toggle === '+' ? '+' : '−' }}</span>
              <span v-if="t.mark" class="tick">
                <svg width="14" height="13" viewBox="0 0 14 13"><path d="M1 7l4 4 8-9" fill="none" stroke="#12c030" stroke-width="3" /></svg>
              </span>
              <span v-if="t.icon && !t.top" class="check">
                <svg width="11" height="11" viewBox="0 0 11 11"><path d="M1.500 5.500l3 3 5-7" fill="none" stroke="#12c030" stroke-width="2.600" /></svg>
              </span>
              <svg v-if="t.icon" class="ticon" width="16" height="16" viewBox="0 0 16 16" v-html="treeIcons[t.icon]"></svg>
              <span v-if="t.label" class="label" :class="{ dim: t.dim }">{{ t.label }}</span>
              <span v-if="t.note" class="note" :class="{ dim: t.dim }">{{ t.note }}</span>
            </div>
            <div class="cell-note"></div>
          </div>
        </div>
      </aside>
    </main>

    <svg class="watermark" width="290" height="102" viewBox="1100 740 290 102">
      <g opacity=".85">
        <path d="M1143 788L1143 747L1179 769Z" fill="#9adaf8" />
        <path d="M1143 788L1179 769V810Z" fill="#84d0f4" />
        <path d="M1143 788L1179 810L1143 829Z" fill="#6cc6f2" />
        <path d="M1143 788L1143 829L1107 810Z" fill="#9cd6f4" />
        <path d="M1143 788L1107 810V769Z" fill="#b4def4" />
        <path d="M1143 788L1107 769L1143 747Z" fill="#d0ecf8" />
        <path d="M1153 759Q1179 770 1172 800M1179 793Q1170 825 1125 818M1143 829Q1110 810 1122 780M1107 805Q1100 765 1143 752" fill="none" stroke="#fff" stroke-width="1" />
        <path d="M1143 775L1163 786V808L1143 819L1123 808V786Z" fill="none" stroke="#fff" stroke-width="4" opacity=".85" />
        <path d="M1143 780L1158 789L1143 798L1128 789Z" fill="#c4eafc" />
        <path d="M1128 789L1143 798V815L1128 806Z" fill="#a4d8f6" />
        <path d="M1158 789L1143 798V815L1158 806Z" fill="#64c4f0" />
      </g>
      <text x="1187" y="786" class="wm-big" textLength="178" lengthAdjust="spacingAndGlyphs">3D世界网</text>
      <text x="1190" y="816" class="wm-small" textLength="173" lengthAdjust="spacingAndGlyphs">WWW.3DSJW.COM</text>
    </svg>
  </div>
</template>

<style scoped>
.app {
  position: relative;
  width: 1390px;
  height: 842px;
  display: flex;
  flex-direction: column;
  overflow: hidden;
  font-family: "Noto Sans CJK SC", "Liberation Sans", sans-serif;
  font-size: 12px;
  color: #111;
  background: #d8d8d8;
}
.defs { position: absolute; }

.titlebar {
  height: 22px;
  flex: none;
  display: flex;
  justify-content: flex-end;
  align-items: flex-start;
  background: linear-gradient(#6a6a6a 0, #9c9c9c 2px, #4a4a4a 7px, #1a1a1a 7px, #1a1a1a 21px, #000 21px);
}
.brand {
  margin: 5px 19px 0 0;
  font: 700 12px/14px "Liberation Sans", sans-serif;
  letter-spacing: 1.2px;
  color: #f2f2f2;
}
.menubar {
  height: 24px;
  flex: none;
  display: flex;
  align-items: center;
  gap: 12.5px;
  padding-left: 11px;
  background: #e3e3e3;
}
.key {
  font: 10px/14px "Liberation Mono", monospace;
  white-space: pre;
}
.tools {
  flex: none;
  height: 102px;
  background: linear-gradient(#d6d6d6, #c6c6c6);
}
.tool-row {
  height: 34px;
  display: flex;
  overflow: hidden;
}
.lead { width: 0; }
.panel {
  height: 34px;
  box-sizing: border-box;
  display: flex;
  align-items: center;
  flex: none;
  background: linear-gradient(#d9d9d9, #cfcfcf);
  border-top: 1px solid #ececec;
  border-bottom: 1px solid #b4b4b4;
  box-shadow: inset -1px 0 #b4b4b4, inset 1px 0 #efefef;
}
.tool {
  width: 31px;
  height: 31px;
  flex: none;
  display: block;
  box-sizing: border-box;
}
.tool svg { display: block; }
.tool.boxed {
  background: #fff;
  border-radius: 2px;
  outline: 1px solid #555;
  outline-offset: -1px;
}
.tool.pressed {
  background: #dedede;
  border-radius: 2px;
  outline: 1px solid #b2b2b2;
  outline-offset: -1px;
}
.arrow {
  width: 12px;
  height: 31px;
  flex: none;
  display: flex;
  align-items: center;
  justify-content: center;
}
.arrow::after {
  content: "";
  border-left: 3.5px solid transparent;
  border-right: 3.5px solid transparent;
  border-top: 4px solid #111;
}
.arrow.low { align-items: flex-end; padding-bottom: 5px; box-sizing: border-box; }
.sep {
  width: 6px;
  height: 29px;
  flex: none;
  background: linear-gradient(90deg, transparent 2px, #b0b0b0 2px, #b0b0b0 3px, #f0f0f0 3px, #f0f0f0 4px, transparent 4px);
}
.grip {
  width: 8px;
  height: 25px;
  flex: none;
  background: repeating-linear-gradient(#f4f4f4 0 2px, #8c8c8c 2px 3px, transparent 3px 5px) 5px 0 / 2px 100% no-repeat;
}
.layer-combo {
  width: 37px;
  height: 20px;
  flex: none;
  display: flex;
  box-sizing: border-box;
  border: 1px solid #555;
  border-radius: 3px;
  background: #fff;
  overflow: hidden;
}
.layer-combo b {
  flex: 1;
  font: 400 12px/18px "Liberation Mono", monospace;
  padding-left: 1px;
}
.layer-combo i, .measure-combo i {
  width: 17px;
  flex: none;
  display: flex;
  align-items: center;
  justify-content: center;
  background: linear-gradient(#6f9ad0, #a6d0f4);
}
.layer-combo i::after, .measure-combo i::after {
  content: "";
  border-left: 6px solid transparent;
  border-right: 6px solid transparent;
  border-top: 7px solid #111;
}
.tool-label {
  width: 209px;
  margin: 0 5px 0 4px;
  flex: none;
  font: 10px/14px "Liberation Mono", monospace;
  color: #a2a2a2;
  white-space: nowrap;
}
.statusbar {
  height: 22px;
  flex: none;
  box-sizing: border-box;
  display: flex;
  align-items: center;
  background: linear-gradient(#e6e6e6, #d2d2d2);
  border-bottom: 2px solid #8e8e8e;
}
.status-text {
  width: 1363px;
  box-sizing: border-box;
  padding-left: 454px;
  font-weight: 700;
  font-size: 12px;
  white-space: nowrap;
}
.status-second { margin-left: 10px; }
.status-cell {
  width: 20px;
  height: 100%;
  border-left: 1px solid #f4f4f4;
  box-shadow: inset 1px 0 #b8b8b8;
}
.main {
  flex: 1;
  min-height: 0;
  display: flex;
}
.viewport {
  position: relative;
  flex: 1;
  background: linear-gradient(#b4b6b6, #e6e7e8);
}
.model {
  position: absolute;
  left: 170px;
  top: 200px;
}
.axis {
  font: 36px "Liberation Sans", sans-serif;
}
.measure {
  position: absolute;
  left: 420px;
  top: 296px;
  width: 194px;
  height: 25px;
  box-sizing: border-box;
  display: flex;
  align-items: center;
  border: 1px solid #8a8a8a;
  background: linear-gradient(#dcdcdc, #b8b8b8);
}
.measure-grip {
  width: 12px;
  height: 100%;
  flex: none;
  background:
    radial-gradient(circle, #111 1px, transparent 1.4px) 1px 1px / 5px 4px,
    linear-gradient(90deg, #6a6a6a, #333);
}
.measure-combo {
  width: 74px;
  height: 18px;
  margin: 0 3px 0 5px;
  flex: none;
  box-sizing: border-box;
  display: flex;
  border: 1px solid #777;
  border-radius: 3px;
  background: #fff;
  overflow: hidden;
}
.measure-combo em {
  flex: 1;
  font-style: normal;
  font-size: 12px;
  line-height: 16px;
  padding-left: 3px;
}
.measure-value {
  font: 10px/14px "Liberation Mono", monospace;
  white-space: nowrap;
}
.navigator {
  width: 260px;
  flex: none;
  box-sizing: border-box;
  display: flex;
  flex-direction: column;
  padding-left: 10px;
  background: #f1f1f1;
  border-left: 1px solid #fff;
}
.nav-title {
  height: 32px;
  flex: none;
  margin: 0;
  padding-left: 5px;
  font-size: 12px;
  font-weight: 700;
  line-height: 32px;
}
.table {
  flex: 1;
  min-height: 0;
  overflow: hidden;
  background: #fff;
  border-left: 1px solid #666;
  border-top: 1px solid #777;
}
.thead {
  height: 16px;
  box-sizing: border-box;
  display: flex;
  background: linear-gradient(#ececec, #d0d0d0);
  border-bottom: 1px solid #999;
  line-height: 15px;
}
.col-name {
  width: 200px;
  box-sizing: border-box;
  padding-left: 6px;
  display: flex;
  align-items: center;
  border-right: 1px solid #999;
}
.col-note { padding-left: 5px; }
.sort {
  margin-left: 14px;
  border-left: 5px solid transparent;
  border-right: 5px solid transparent;
  border-bottom: 6px solid #111;
}
.row {
  height: 20px;
  box-sizing: border-box;
  display: flex;
  background: #fff;
  border-bottom: 1px solid #e6e6e6;
}
.row.alt { background: #f6f6f6; }
.cell-name {
  position: relative;
  width: 200px;
  flex: none;
  box-sizing: border-box;
  display: flex;
  align-items: center;
  border-right: 1px solid #e4e4e4;
  white-space: nowrap;
}
.cell-name.top { padding-left: 20px; }
.cell-name.feat { padding-left: 41px; }
.guide-v, .guide-h { position: absolute; }
.guide-v { width: 0; border-left: 1px dotted #888; top: 0; bottom: -1px; }
.guide-v.top { left: 9px; }
.guide-v.top.first { top: 9px; }
.guide-v.top.last { bottom: 50%; }
.guide-v.sub { left: 28px; }
.guide-v.sub.last { bottom: 50%; }
.guide-h { height: 0; border-top: 1px dotted #888; top: 9px; }
.guide-h.top { left: 9px; width: 10px; }
.guide-h.sub { left: 28px; width: 12px; }
.toggle {
  position: absolute;
  left: 5px;
  top: 5px;
  width: 9px;
  height: 9px;
  box-sizing: border-box;
  border: 1px solid #777;
  background: #fff;
  font: 9px/7px "Liberation Mono", monospace;
  text-align: center;
}
.tick { height: 13px; margin-right: 1px; margin-left: 1px; }
.tick svg, .check svg { display: block; }
.check {
  width: 13px;
  height: 13px;
  flex: none;
  box-sizing: border-box;
  border: 1px solid #111;
  background: #fff;
  margin-right: 1px;
}
.ticon { flex: none; margin-right: 2px; }
.label.dim { color: #9a9a9a; }
.note {
  margin-left: 9px;
  padding-top: 2px;
  font: 10px/14px "Liberation Mono", monospace;
  color: #333;
}
.note.dim { color: #9a9a9a; }
.watermark {
  position: absolute;
  left: 1100px;
  top: 740px;
  pointer-events: none;
}
.wm-big {
  font: 700 28px "Noto Sans CJK SC", sans-serif;
  fill: #fff;
  opacity: .5;
}
.wm-small {
  font: 700 13px "Liberation Sans", sans-serif;
  fill: #fff;
  opacity: .5;
}
</style>

<style>
html, body { background: #d8d8d8; }
</style>
